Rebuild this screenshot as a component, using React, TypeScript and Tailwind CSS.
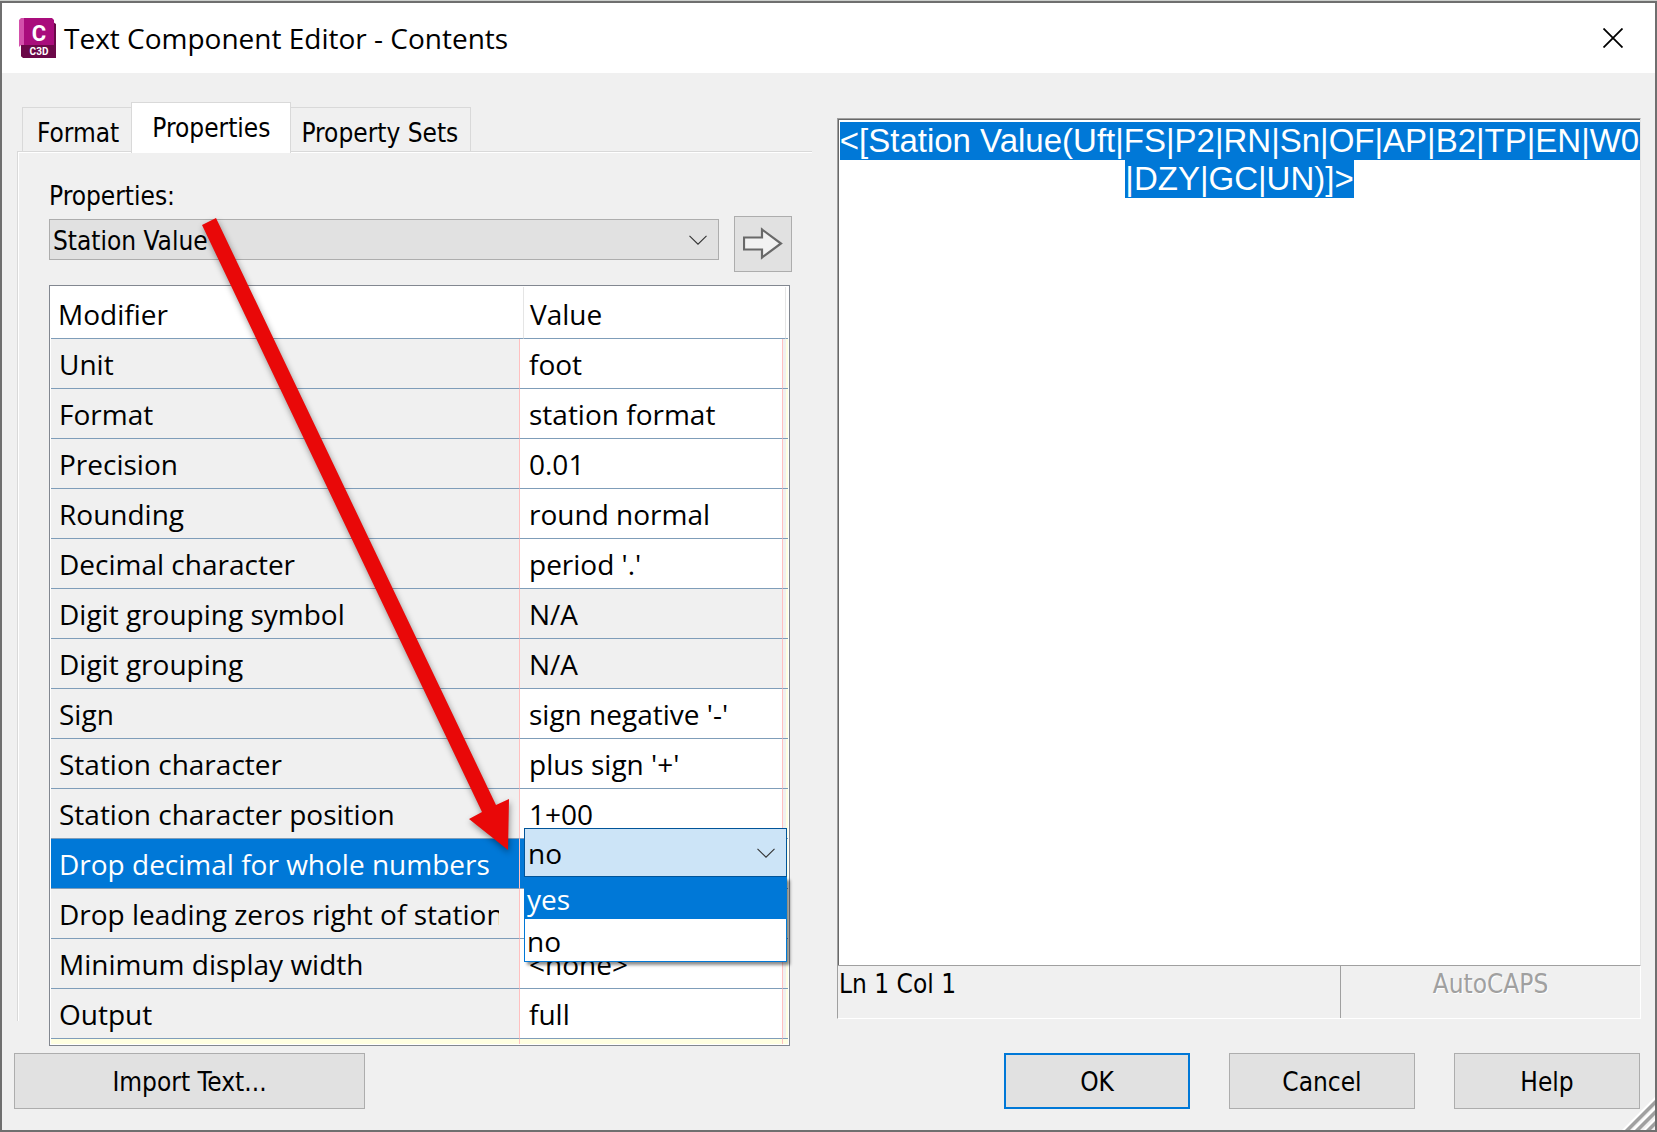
import React, { useEffect, useRef, useState } from "react";
import clsx from "clsx";

const TABS = ["Format", "Properties", "Property Sets"];

const MODIFIERS = [
  { name: "Unit", value: "foot" },
  { name: "Format", value: "station format" },
  { name: "Precision", value: "0.01" },
  { name: "Rounding", value: "round normal" },
  { name: "Decimal character", value: "period '.'" },
  { name: "Digit grouping symbol", value: "N/A", disabled: true },
  { name: "Digit grouping", value: "N/A", disabled: true },
  { name: "Sign", value: "sign negative '-'" },
  { name: "Station character", value: "plus sign '+'" },
  { name: "Station character position", value: "1+00" },
  { name: "Drop decimal for whole numbers", value: "no", active: true },
  { name: "Drop leading zeros right of station", value: "" },
  { name: "Minimum display width", value: "<none>" },
  { name: "Output", value: "full" },
];

const FIELD_CODE =
  "<[Station Value(Uft|FS|P2|RN|Sn|OF|AP|B2|TP|EN|W0|DZY|GC|UN)]>";

const Logo = () => (
  <svg width="37" height="40" viewBox="0 0 37 40" aria-hidden="true">
    <path d="M3 24h31V4l3 2v34H5l-3-2V26z" fill="#6b0848" />
    <path d="M5 0h28l2 2v25H5z" fill="#a90d7c" />
    <path d="M0 2l2-2h3v27H2l-2 2z" fill="#d350ab" />
    <path d="M2 27h35v13H4l-2-2z" fill="#6b0848" />
    <text
      x="20"
      y="23"
      fill="#fff"
      textAnchor="middle"
      className="font-['Roboto',sans-serif] text-[22px] font-bold"
    >
      C
    </text>
    <text
      x="20"
      y="37"
      fill="#fff"
      textAnchor="middle"
      className="font-['Roboto',sans-serif] text-[10px] font-bold"
    >
      C3D
    </text>
  </svg>
);

const Chevron = () => (
  <svg
    width="18"
    height="10"
    viewBox="0 0 18 10"
    fill="none"
    stroke="#333"
    strokeWidth="1.1"
    className="pointer-events-none absolute right-3 top-1/2 -translate-y-1/2"
    aria-hidden="true"
  >
    <path d="M0.5 0.8L9 9.2L17.5 0.8" />
  </svg>
);

const ResizeGrip = () => (
  <svg
    width="34"
    height="34"
    viewBox="0 0 34 34"
    className="absolute bottom-0 right-0"
    aria-hidden="true"
  >
    <path
      d="M1 34L34 1V4L4 34zM11 34L34 11V14L14 34zM22 34L34 22V25L25 34z"
      fill="#fff"
    />
    <path
      d="M4 34L34 4V9L9 34zM14 34L34 14V19L19 34zM25 34L34 25V30L30 34z"
      fill="#a0a0a0"
    />
  </svg>
);

const ValuePicker = ({ label }: { label: string }) => {
  const [value, setValue] = useState("no");
  const [highlighted, setHighlighted] = useState("yes");

  return (
    <div className="absolute -right-[5px] -top-[11px] left-1 z-10">
      <div className="relative">
        <select
          aria-label={label}
          value={value}
          onChange={(e) => setValue(e.target.value)}
          className="block h-[49px] w-full appearance-none border border-[#005499] bg-[#cce4f7] pl-[3px] text-black outline-none"
        >
          <option value="yes">yes</option>
          <option value="no">no</option>
        </select>
        <Chevron />
      </div>
      <ul
        role="listbox"
        aria-label={label}
        className="border border-t-0 border-[#0078d7] bg-white shadow-[3px_3px_3px_rgba(0,0,0,0.45)]"
      >
        {["yes", "no"].map((option) => (
          <li
            key={option}
            role="option"
            aria-selected={option === highlighted}
            onMouseEnter={() => setHighlighted(option)}
            onClick={() => setValue(option)}
            className={clsx(
              "h-[42px] pl-0.5 pt-[3px] leading-[39px]",
              option === highlighted ? "bg-[#0078d7] text-white" : "text-black"
            )}
          >
            {option}
          </li>
        ))}
      </ul>
    </div>
  );
};

const ModifierTable = () => (
  <div className="border border-[#828790] bg-white p-px">
    <table className="w-full table-fixed border-separate border-spacing-0 whitespace-nowrap text-left font-['Open_Sans',sans-serif] text-[28px] leading-[48px]">
      <colgroup>
        <col className="w-[468px]" />
        <col className="w-1" />
        <col />
        <col className="w-[3px]" />
        <col className="w-0.5" />
      </colgroup>
      <thead>
        <tr className="h-[52px]">
          <th
            colSpan={2}
            className="border-b border-[#7f9db9] p-0 pl-[7px] pt-0.5 font-normal"
          >
            Modifier
          </th>
          <th
            colSpan={2}
            className="border-x border-b border-x-[#e5e5e5] border-b-[#7f9db9] p-0 pl-1.5 pt-0.5 font-normal"
          >
            Value
          </th>
          <td className="border-b border-[#7f9db9] p-0" />
        </tr>
      </thead>
      <tbody>
        {MODIFIERS.map((row) => (
          <tr key={row.name} className="h-[50px]">
            <td
              className={clsx(
                "border-b border-[#7f9db9] p-0 pl-2 pr-5",
                row.active ? "bg-[#0078d7] text-white" : "bg-[#f0f0f0]"
              )}
            >
              <div className="overflow-hidden">{row.name}</div>
            </td>
            <td
              colSpan={2}
              className={clsx(
                "relative border-x border-b border-x-[#ffc0c0] border-b-[#7f9db9] p-0 pl-[9px]",
                row.active && "bg-[#0078d7]",
                row.disabled && "bg-[#f0f0f0]"
              )}
            >
              {row.active ? <ValuePicker label={row.name} /> : row.value}
            </td>
            <td className="border-b border-[#7f9db9] bg-[#f0f0f0] p-0" />
            <td className="border-b border-[#7f9db9] bg-[#ffffe1] p-0" />
          </tr>
        ))}
        <tr className="h-[5px] bg-[#ffffe1]">
          <td className="p-0" />
          <td colSpan={2} className="border-x border-[#ffc0c0] p-0" />
          <td colSpan={2} className="p-0" />
        </tr>
      </tbody>
    </table>
  </div>
);

const RedArrow = () => (
  <svg
    width="340"
    height="660"
    viewBox="0 0 340 660"
    className="pointer-events-none absolute left-[170px] top-[135px] z-20 drop-shadow-[1px_3px_3px_rgba(0,0,0,0.4)]"
    aria-hidden="true"
  >
    <path
      d="M15 17L29 10L309 597L322 591L321 642L282 611L295 604Z"
      fill="#e90808"
    />
  </svg>
);

const App = () => {
  const [tab, setTab] = useState("Properties");
  const [text, setText] = useState(FIELD_CODE);
  const editor = useRef<HTMLTextAreaElement>(null);

  useEffect(() => {
    editor.current?.select();
  }, []);

  const button = "h-14 border border-[#adadad] bg-[#e1e1e1] pt-0.5 leading-8";

  return (
    <div className="flex min-h-screen flex-col border-t border-[#cccfcc] bg-[#f0f0f0] font-['DejaVu_Sans_Condensed','DejaVu_Sans',sans-serif] text-[26px] text-black">
      <div className="relative flex flex-1 flex-col border-2 border-[#6f6f6f]">
        <header className="flex h-[70px] items-center bg-white pl-[17px] pr-8">
          <Logo />
          <h1 className="ml-2 flex-1 font-['Open_Sans',sans-serif] text-[28px]">
            Text Component Editor - Contents
          </h1>
          <button type="button" aria-label="Close">
            <svg
              width="20"
              height="20"
              viewBox="0 0 20 20"
              stroke="#000"
              strokeWidth="1.8"
            >
              <path d="M0.5 0.5L19.5 19.5M19.5 0.5L0.5 19.5" />
            </svg>
          </button>
        </header>

        <main className="grid grid-cols-[795fr_804fr] items-start gap-x-[25px] pl-[15px] pr-3.5">
          <section className="relative pt-[29px]">
            <div role="tablist" className="flex h-[49px] items-end pl-[5px]">
              {TABS.map((name) => (
                <button
                  key={name}
                  type="button"
                  role="tab"
                  aria-selected={tab === name}
                  onClick={() => setTab(name)}
                  className={clsx(
                    "border-t border-[#d9d9d9] leading-8",
                    tab === name
                      ? "relative z-10 -mb-0.5 h-[51px] border-x bg-white px-5"
                      : "h-11 px-3 pt-1.5 first:border-l first:pl-3.5 last:border-r last:pl-2.5"
                  )}
                >
                  {name}
                </button>
              ))}
            </div>
            <div className="border-l border-t border-[#d9d9d9]">
              <div className="border-l border-t border-white pb-px pl-[30px] pr-5 pt-[27px]">
                <label htmlFor="property" className="mb-1 block leading-8">
                  Properties:
                </label>
                <div className="flex items-start gap-[15px]">
                  <div className="relative mt-[3px] flex-1">
                    <select
                      id="property"
                      className="block h-[41px] w-full appearance-none border border-[#adadad] bg-[#e1e1e1] pl-[3px] pt-0.5 outline-none"
                    >
                      <option>Station Value</option>
                    </select>
                    <Chevron />
                  </div>
                  <button
                    type="button"
                    aria-label="Insert property"
                    className="flex h-14 w-[58px] items-center justify-center border border-[#adadad] bg-[#e1e1e1]"
                  >
                    <svg
                      width="40"
                      height="34"
                      viewBox="0 0 40 34"
                      fill="#f2f2f2"
                      stroke="#696969"
                      strokeWidth="2.2"
                    >
                      <path d="M1 10.5H19V2.5L38 16.5L19 30.5V22.5H1Z" />
                    </svg>
                  </button>
                </div>
                <div className="-mb-[26px] mt-[13px] pr-0.5">
                  <ModifierTable />
                </div>
              </div>
            </div>
            <RedArrow />
          </section>

          <section className="pt-[45px]">
            <div className="h-[847px] border-l border-r border-t border-l-[#a0a0a0] border-r-[#e3e3e3] border-t-[#a0a0a0]">
              <textarea
                ref={editor}
                aria-label="Text editor"
                spellCheck={false}
                value={text}
                onChange={(e) => setText(e.target.value)}
                className="block h-full w-full resize-none break-all border-l border-t border-[#696969] bg-white pt-0.5 text-center font-['Liberation_Sans',Arial,sans-serif] text-[33px] leading-[38px] outline-none selection:bg-[#0078d7] selection:text-white"
              />
            </div>
            <div className="flex h-[54px] border-b border-l border-r border-t border-b-white border-l-[#a0a0a0] border-r-white border-t-[#a0a0a0] leading-9">
              <span className="flex-1 pl-px">Ln 1 Col 1</span>
              <span className="w-[300px] border-l border-[#a0a0a0] text-center text-[#a0a0a0] [text-shadow:1px_1px_0_#fff]">
                AutoCAPS
              </span>
            </div>
          </section>
        </main>

        <footer className="mt-8 flex justify-between pb-[21px] pl-3 pr-[15px]">
          <button type="button" className={clsx(button, "w-[351px]")}>
            Import Text...
          </button>
          <div className="flex gap-[39px]">
            <button
              type="button"
              className="h-14 w-[186px] border-2 border-[#0078d7] bg-[#e1e1e1] pt-0.5 leading-8"
            >
              OK
            </button>
            <button type="button" className={clsx(button, "w-[186px]")}>
              Cancel
            </button>
            <button type="button" className={clsx(button, "w-[186px]")}>
              Help
            </button>
          </div>
        </footer>
        <ResizeGrip />
      </div>
    </div>
  );
};

export default App;
